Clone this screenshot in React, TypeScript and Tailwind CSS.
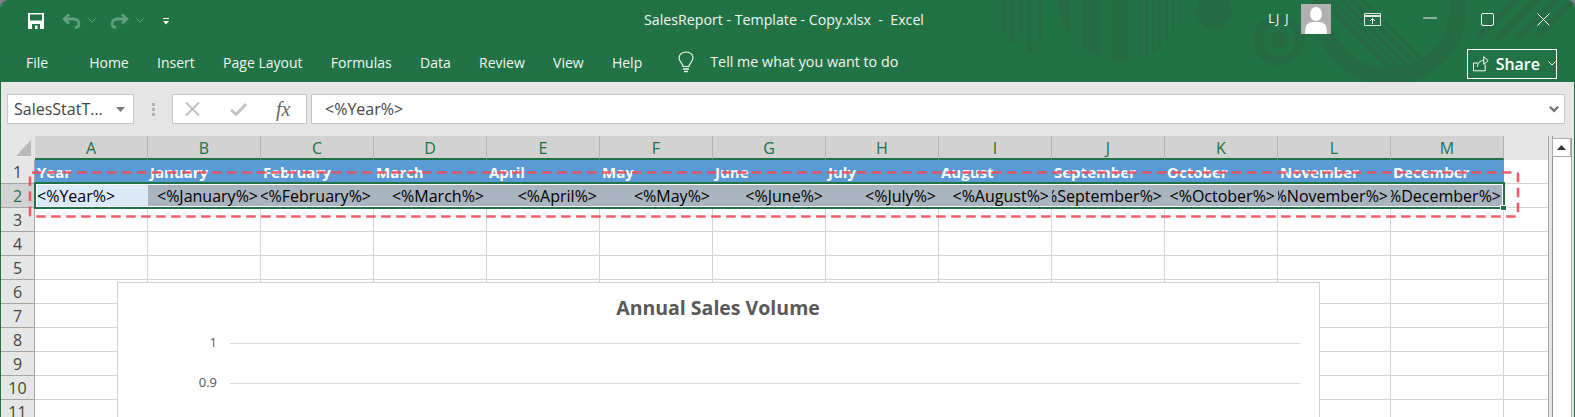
import React from "react";

const cols = ["A","B","C","D","E","F","G","H","I","J","K","L","M"];
const heads = ["Year","January","February","March","April","May","June","July","August","September","October","November","December"];
const tabs = ["Home","Insert","Page Layout","Formulas","Data","Review","View","Help"];
const emptyRows = [3,4,5,6,7,8,9,10,11];

function Pattern() {
  const thin: [number, number, number][] = [[1001,5,33],[1010,5,42],[1019,5,33],[1027,5,53],[1037,5,39]];
  const arcBars: [number, number][] = [[1055,15],[1083,17],[1112,16],[1138,3],[1145,3],[1152,3],[1158,3],[1165,3],[1172,3],[1178,3],[1185,2.5]];
  const stripes = [1322,1332,1342,1352,1362];
  const right: [number, number, number, number][] = [[1478,38,1520,-4],[1496,40,1540,-4],[1516,40,1560,-4],[1536,38,1580,-6]];
  const c = "#256a45";
  return (
    <svg className="absolute left-0 top-0 pointer-events-none" width="1575" height="82" viewBox="0 0 1575 82">
      <defs>
        <clipPath id="bars"><circle cx="1122" cy="-4" r="64.5" /></clipPath>
        <clipPath id="inner"><circle cx="1390" cy="8" r="60" /></clipPath>
      </defs>
      {thin.map(([x,w,h]) => <rect key={x} x={x} y="0" width={w} height={h} fill={c} />)}
      <g clipPath="url(#bars)">{arcBars.map(([x,w]) => <rect key={x} x={x} y="0" width={w} height="70" fill={c} />)}</g>
      <circle cx="1214" cy="11" r="17.5" fill={c} />
      <circle cx="1279" cy="40" r="21" fill="none" stroke={c} strokeWidth="9" />
      <circle cx="1279" cy="40" r="9" fill={c} />
      <circle cx="1390" cy="8" r="68.5" fill="none" stroke={c} strokeWidth="17" />
      <g clipPath="url(#inner)">
        {stripes.map((s) => <line key={s} x1={s} y1="0" x2={s + 90} y2="90" stroke={c} strokeWidth="4.5" />)}
      </g>
      {right.map(([a,b,d,e]) => <line key={a} x1={a} y1={b} x2={d} y2={e} stroke={c} strokeWidth="7" />)}
    </svg>
  );
}

function SaveIcon() {
  return (
    <svg width="16" height="16" viewBox="0 0 16 16" className="block">
      <path d="M0 0H16V16H0Z" fill="#fff" />
      <path d="M2 1.5H14V7.5H2Z" fill="#217346" />
      <path d="M4 11H12V16H9.5V12.5H7V16H4Z" fill="#217346" />
    </svg>
  );
}

function Undo({ flip }: { flip?: boolean }) {
  return (
    <svg width="19" height="16" viewBox="0 0 19 16" className={flip ? "block -scale-x-100" : "block"}>
      <path d="M7 1.5L2 6L7 10.5M2.5 6H11.5C15 6 17 8 17 10.5C17 13 15.5 14.5 13 14.5" fill="none" stroke="#5f9f80" strokeWidth="2.8" />
    </svg>
  );
}

function Chev({ color = "#5f9f80" }: { color?: string }) {
  return (
    <svg width="8" height="5" viewBox="0 0 8 5" className="block">
      <path d="M0.5 0.5L4 4L7.5 0.5" fill="none" stroke={color} strokeWidth="1" />
    </svg>
  );
}

function TitleBar() {
  return (
    <div className="h-[41px] grid grid-cols-[1fr_auto_1fr] items-center relative">
      <div className="flex items-center pl-[28px]">
        <SaveIcon />
        <div className="ml-[18px]"><Undo /></div>
        <div className="ml-[7px]"><Chev /></div>
        <div className="ml-[14px]"><Undo flip /></div>
        <div className="ml-[7px]"><Chev /></div>
        <svg width="6" height="7" viewBox="0 0 6 7" className="block ml-[19px] mt-[2px]">
          <path d="M0 0H6V1H0ZM0 3H6L3 6.5Z" fill="#fff" />
        </svg>
      </div>
      <div className="text-[14.2px] text-[#f4f7f5] whitespace-pre pb-[1px] pr-[7px]">SalesReport - Template - Copy.xlsx  -  Excel</div>
      <div className="flex items-center justify-end pb-[3px]">
        <span className="text-[12px] text-white tracking-[1.5px] mr-[11px]">LJ J</span>
        <div className="w-[30px] h-[30px] bg-[#b1b1b1] overflow-hidden mr-[33px]">
          <svg width="30" height="30" viewBox="0 0 30 30" className="block">
            <ellipse cx="15" cy="10" rx="6" ry="7" fill="#fff" />
            <path d="M4 30C4 22 5 19.5 11 18H19C25 19.5 26 22 26 30Z" fill="#fff" />
          </svg>
        </div>
        <svg width="17" height="13" viewBox="0 0 17 13" className="block mr-[42px]" fill="none" stroke="#fff">
          <path d="M0.5 0.5H16.5V12.5H0.5Z" strokeOpacity="0.85" />
          <path d="M1 3H16" strokeWidth="2" strokeOpacity="0.85" />
          <path d="M8.5 11V5.5M6 8L8.5 5.5L11 8" />
        </svg>
        <svg width="14" height="2" viewBox="0 0 14 2" className="block mr-[44px] mb-[2px]">
          <path d="M0 1H14" stroke="#fff" strokeOpacity="0.9" />
        </svg>
        <svg width="13" height="13" viewBox="0 0 13 13" className="block mr-[43px]">
          <rect x="0.5" y="0.5" width="12" height="12" rx="1.5" fill="none" stroke="#fff" />
        </svg>
        <svg width="13" height="13" viewBox="0 0 13 13" className="block mr-[25px]">
          <path d="M0.5 0.5L12.5 12.5M12.5 0.5L0.5 12.5" stroke="#fff" />
        </svg>
      </div>
    </div>
  );
}

function RibbonTabs() {
  return (
    <div className="h-[41px] flex items-center relative text-[14px] text-[#f2f6f3] pt-[1px]">
      <span className="ml-[26px] mr-[41px]">File</span>
      <div className="flex gap-[28.3px]">
        {tabs.map((t) => <span key={t}>{t}</span>)}
      </div>
      <svg width="16" height="23" viewBox="0 0 16 23" className="block ml-[36px]" fill="none" stroke="#eef4f0">
        <path d="M5 15.5C5 12.5 1 11 1 6.8C1 3.5 4 1 8 1C12 1 15 3.5 15 6.8C15 11 11 12.5 11 15.5Z" strokeWidth="1.2" />
        <path d="M5 18H11M6 20.5H10" strokeWidth="1.3" />
      </svg>
      <span className="ml-[16px] text-[14.3px]">Tell me what you want to do</span>
      <div className="ml-auto mr-[18px] mt-[3px] w-[90px] h-[30px] border border-white flex items-center pl-[5px] text-[16px] font-semibold text-white">
        <svg width="17" height="17" viewBox="0 0 17 17" className="block" fill="none" stroke="#fff">
          <path d="M0.5 8V16H12.5V9.5M0.5 8H5" />
          <path d="M4.5 12C4.5 8 7 5.5 11 5.5M11 1.5L15.5 5.5L11 9.5V1.5Z" />
        </svg>
        <span className="ml-[6px]">Share</span>
        <div className="ml-[8px]"><Chev color="#fff" /></div>
      </div>
    </div>
  );
}

function FormulaBar() {
  return (
    <div className="h-[54px] bg-[#e6e6e6] flex items-start pt-[12px] pl-[6px] pr-[9px] text-[16px] text-[#444]">
      <div className="w-[127px] h-[30px] bg-white border border-[#c6c6c6] flex items-center pl-[6px] pr-[8px] justify-between">
        <span>SalesStatT...</span>
        <svg width="9" height="5" viewBox="0 0 9 5" className="block"><path d="M0 0H9L4.5 5Z" fill="#777" /></svg>
      </div>
      <div className="w-[38px] h-[30px] flex flex-col items-center justify-center gap-[2px]">
        <div className="w-[3px] h-[3px] bg-[#b0b0b0]" />
        <div className="w-[3px] h-[3px] bg-[#b0b0b0]" />
        <div className="w-[3px] h-[3px] bg-[#b0b0b0]" />
      </div>
      <div className="w-[135px] h-[30px] bg-white border border-[#c6c6c6] flex items-center pl-[12px]">
        <svg width="15" height="14" viewBox="0 0 15 14" className="block"><path d="M1 0.5L14 13.5M14 0.5L1 13.5" stroke="#bfbfbf" strokeWidth="2" /></svg>
        <svg width="17" height="13" viewBox="0 0 17 13" className="block ml-[30px]"><path d="M1 7L6 11.5L16 1" fill="none" stroke="#c4c4c4" strokeWidth="3" /></svg>
        <span className="ml-[29px] font-['Liberation_Serif',serif] italic text-[20px] leading-none text-[#666]">fx</span>
      </div>
      <div className="ml-[4px] flex-1 h-[30px] bg-white border border-[#c6c6c6] flex items-center pl-[13px] pr-[5px] justify-between">
        <span>&lt;%Year%&gt;</span>
        <svg width="10" height="7" viewBox="0 0 10 7" className="block"><path d="M0 1.5L1.5 0L5 3L8.5 0L10 1.5L5 6.5Z" fill="#777" /></svg>
      </div>
    </div>
  );
}

function Sheet() {
  return (
    <div className="flex-1 relative flex bg-[#e6e6e6] overflow-hidden">
      <div className="w-[1547px] shrink-0">
        <div className="h-[24px] flex">
          <div className="w-[34px] relative shrink-0">
            <svg width="33" height="23" viewBox="0 0 33 23" className="block">
              <path d="M15 20H30V4Z" fill="#b9b9b9" />
            </svg>
          </div>
          {cols.map((c) => (
            <div key={c} className="w-[113px] shrink-0 bg-[#d2d2d2] border-r border-[#b3b3b3] flex items-center justify-center pt-[2px] text-[16px] text-[#217346] font-['Open_Sans',sans-serif] border-b-2 border-b-[#217346]">{c}</div>
          ))}
        </div>
        <div className="flex">
          <div className="w-[34px] shrink-0 bg-[#e6e6e6] border-r border-[#a5a5a5] text-[16px] text-[#444]">
            {[1,2,...emptyRows].map((n) => (
              <div key={n} className={n === 2 ? "h-[24px] bg-[#d2d2d2] text-[#217346] border-b border-[#a5a5a5] flex items-center justify-center" : "h-[24px] border-b border-[#a5a5a5] flex items-center justify-center"}>{n}</div>
            ))}
          </div>
          <div className="flex-1 bg-white font-['Open_Sans',sans-serif] text-[16px]">
            <div className="h-[24px] flex">
              {heads.map((h) => (
                <div key={h} className="w-[113px] shrink-0 bg-[#5b9bd5] text-white text-[15px] font-bold pl-[2px] pt-[2px] leading-[20px] whitespace-nowrap overflow-hidden">{h}</div>
              ))}
              <Filler />
            </div>
            <div className="h-[24px] flex">
              {heads.map((h, i) => (
                <div key={h} className={i === 0 ? "w-[113px] shrink-0 bg-[#dce9f7] text-black pl-[2px] flex items-center" : "w-[113px] shrink-0 bg-[#aab4be] text-black flex items-center justify-end pr-[3px] overflow-hidden whitespace-nowrap"}>
                  <span className="shrink-0">&lt;%{h}%&gt;</span>
                </div>
              ))}
              <Filler />
            </div>
            {emptyRows.map((r) => (
              <div key={r} className="h-[24px] flex">
                {cols.map((c) => <div key={c} className="w-[113px] shrink-0 border-r border-b border-[#d4d4d4]" />)}
                <Filler />
              </div>
            ))}
          </div>
        </div>
      </div>
      <div className="flex-1 border-l border-[#a5a5a5] flex">
        <div className="w-[4px] bg-[#e6e6e6] border-r border-[#8f8f8f]" />
        <div className="w-[19px] bg-white border-r border-[#a5a5a5] mt-[2px]">
          <div className="h-[19px] border border-[#ababab] flex items-center justify-center -ml-px">
            <svg width="9" height="5" viewBox="0 0 9 5" className="block"><path d="M0 5H9L4.5 0Z" fill="#333" /></svg>
          </div>
        </div>
      </div>

      {/* selection outline */}
      <div className="absolute left-[33px] top-[46px] w-[1471px] h-[27px] border-2 border-[#217346] pointer-events-none">
        <div className="h-full border border-white" />
      </div>
      <div className="absolute left-[1499px] top-[69px] w-[7px] h-[6px] bg-[#217346] border border-white" />

      {/* red dashed annotation */}
      <svg className="absolute left-0 top-0 pointer-events-none" width="1575" height="120" viewBox="0 0 1575 120">
        <rect x="29" y="36.5" width="1488" height="44" rx="2" fill="none" stroke="#ee4b57" strokeOpacity="0.9" strokeWidth="2.6" strokeDasharray="9.5 5.5" />
      </svg>

      {/* chart */}
      <div className="absolute left-[116px] top-[146px] w-[1203px] h-[200px] bg-white border border-[#d0d0d0] text-[#595959]">
        <div className="text-center text-[19.5px] font-bold pt-[11px] leading-[28px] font-['Open_Sans',sans-serif] pr-[1px]">Annual Sales Volume</div>
        <div className="mt-[21px] flex flex-col gap-[39px] text-[13px]">
          {["1","0.9"].map((v) => (
            <div key={v} className="h-[1px] flex items-center">
              <span className="w-[99px] text-right shrink-0 -mt-[2px]">{v}</span>
              <div className="ml-[13px] w-[1070px] h-[1px] bg-[#d9d9d9]" />
            </div>
          ))}
        </div>
      </div>
    </div>
  );
}

function Filler() {
  return <div className="flex-1 border-b border-[#d4d4d4]" />;
}

export default function App() {
  return (
    <div className="w-[1575px] h-[417px] bg-[#8a7a95] overflow-hidden font-['Open_Sans',sans-serif]">
      <div className="h-full rounded-t-[7px] overflow-hidden border-x border-[#217346] flex flex-col bg-[#e6e6e6]">
        <div className="h-[82px] bg-[#217346] relative -mx-px">
          <Pattern />
          <TitleBar />
          <RibbonTabs />
        </div>
        <FormulaBar />
        <Sheet />
      </div>
    </div>
  );
}
